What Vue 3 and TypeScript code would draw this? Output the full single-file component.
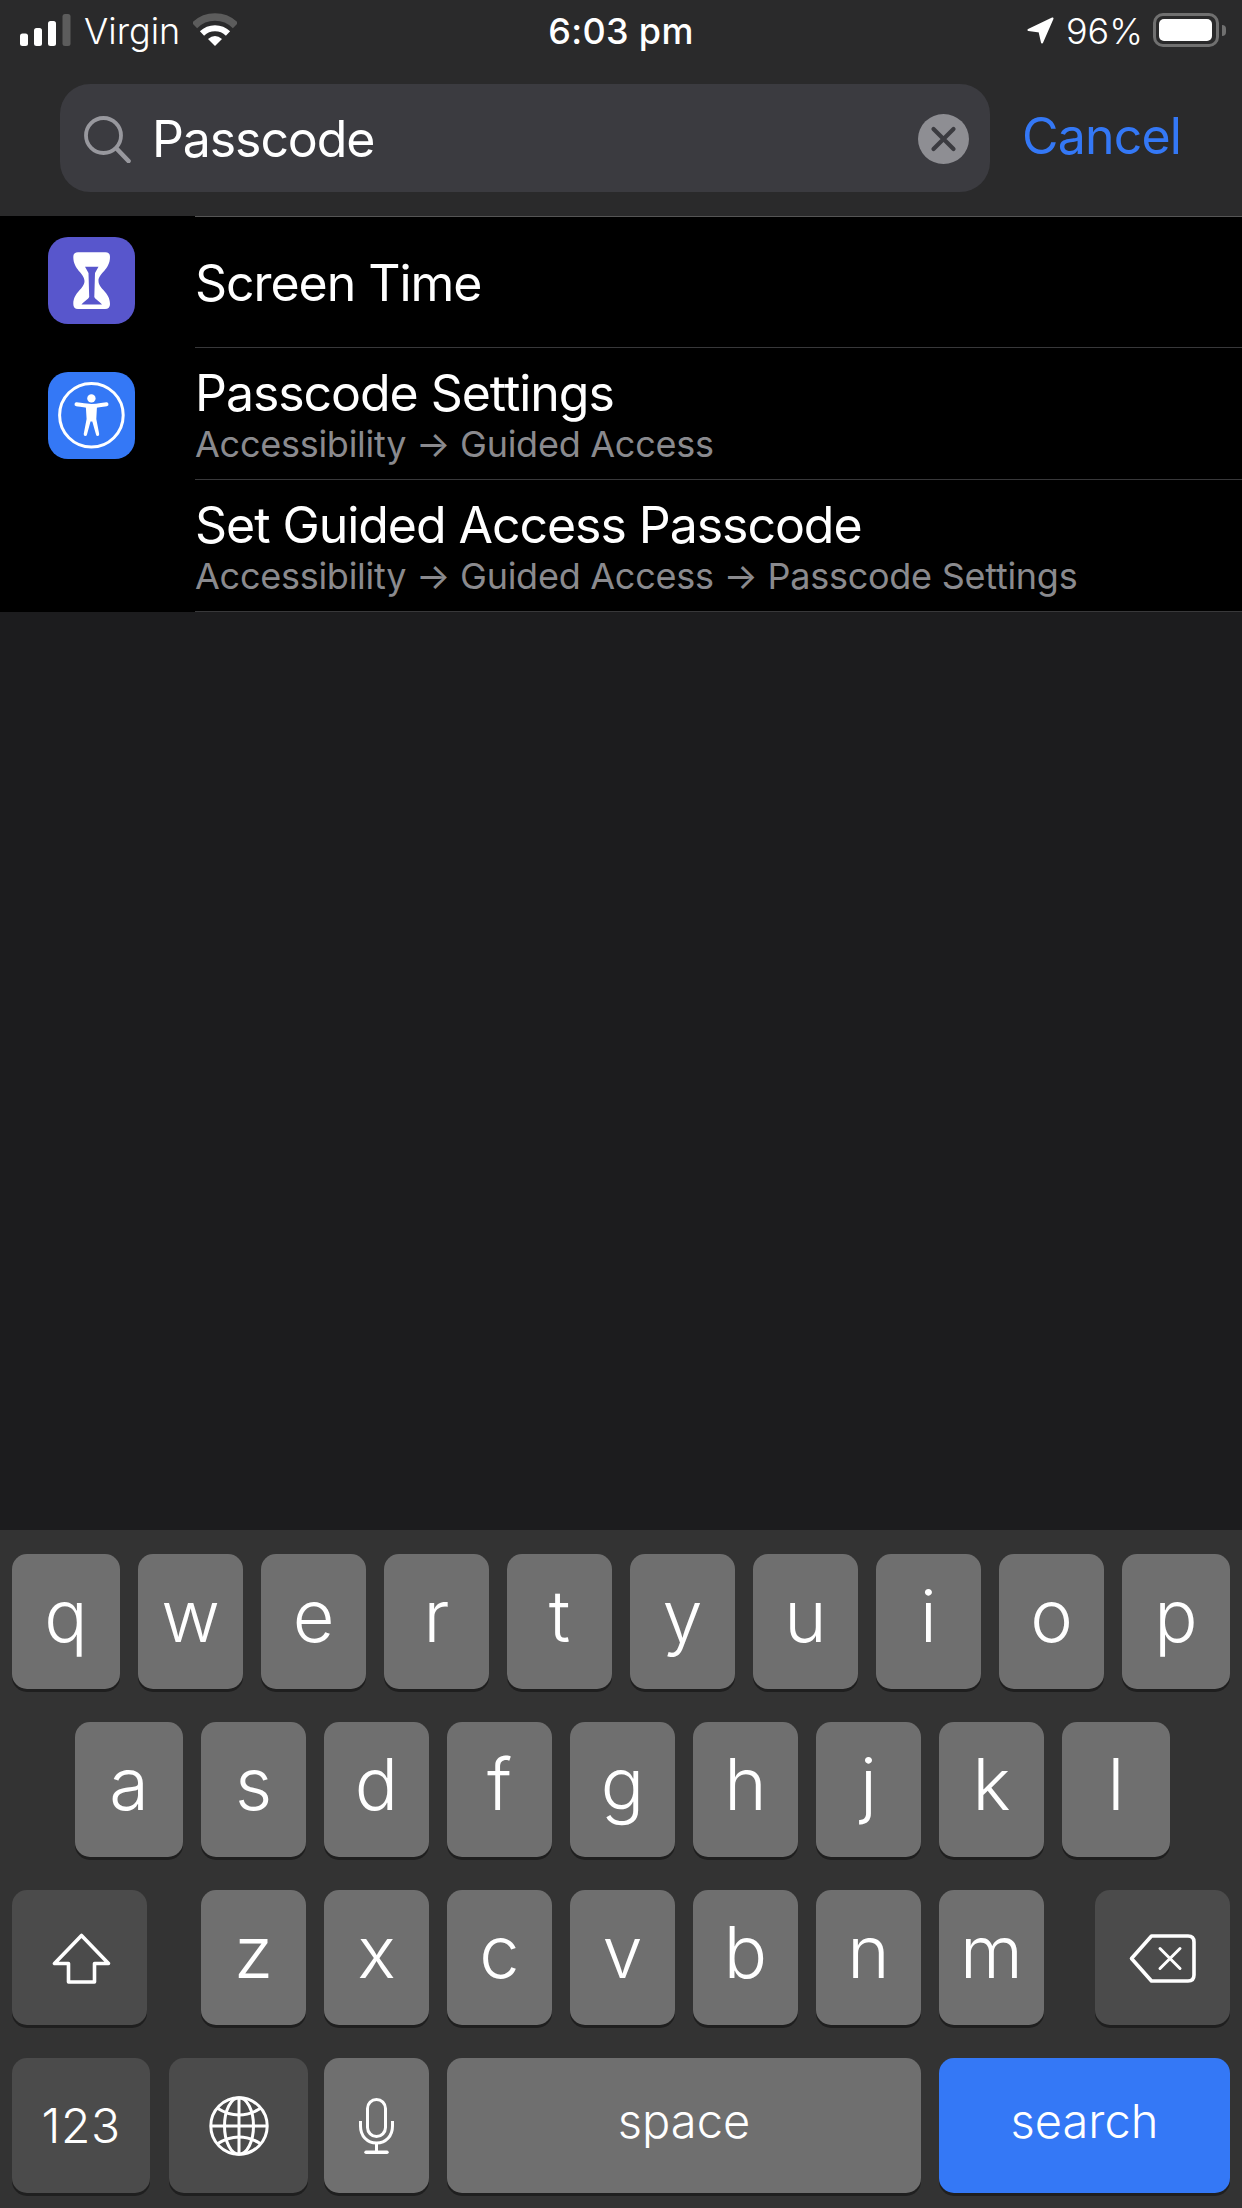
<script setup lang="ts">
interface KeyDef { label: string; wide?: boolean }
const toKeys = (letters: string, wideEnds: boolean): KeyDef[] =>
  letters.split('').map((label, i, all) => ({
    label,
    wide: wideEnds && (i === 0 || i === all.length - 1),
  }))
const row1 = toKeys('qwertyuiop', true)
const row2 = toKeys('asdfghjkl', true)
const row3 = toKeys('zxcvbnm', false)
</script>

<template>
  <div class="page">
    <header class="top">
      <div class="status">
        <div class="st-left">
          <svg class="signal" width="51" height="32" viewBox="0 0 51 32">
            <rect x="0" y="19.5" width="8" height="12.5" rx="2.5" fill="#fff" />
            <rect x="14" y="14" width="8" height="18" rx="2.5" fill="#fff" />
            <rect x="28" y="7" width="8" height="25" rx="2.5" fill="#fff" />
            <rect x="42.5" y="0" width="8" height="32" rx="2.5" fill="#5c5c5c" />
          </svg>
          <span class="carrier">Virgin</span>
          <svg class="wifi" width="44" height="33" viewBox="0 0 44 33" fill="none">
            <path d="M1.5 12.5 A29 29 0 0 1 42.5 12.5" stroke="#5c5c5c" stroke-width="7.5" />
            <path d="M9 20.5 A18.5 18.5 0 0 1 35 20.5" stroke="#fff" stroke-width="6" />
            <path d="M22 33 L15 26 Q22 20 29 26 Z" fill="#fff" />
          </svg>
        </div>
        <div class="time">6:03 pm</div>
        <div class="st-right">
          <svg class="loc" width="27" height="27" viewBox="0 0 27 27">
            <path d="M25.5 1.5 L1.5 13 L12.5 14.5 L15 25.5 Z" fill="#fff" stroke="#fff" stroke-width="2" stroke-linejoin="round" />
          </svg>
          <span class="pct">96%</span>
          <div class="battery">
            <div class="batt-fill"></div>
          </div>
          <div class="batt-nub"></div>
        </div>
      </div>
      <div class="search-row">
        <div class="field">
          <svg class="mag" width="47" height="47" viewBox="0 0 47 47" fill="none" stroke="#98989e" stroke-width="3.8" stroke-linecap="round">
            <circle cx="19.5" cy="19.5" r="17.5" />
            <path d="M32.5 32.5 L44.5 45" stroke-width="4.6" />
          </svg>
          <span class="query">Passcode</span>
          <svg class="clear" width="51" height="50" viewBox="0 0 51 50">
            <ellipse cx="25.5" cy="25" rx="25.5" ry="25" fill="#8e8e93" />
            <path d="M15.5 15 L35.5 35 M35.5 15 L15.5 35" stroke="#3b3b40" stroke-width="4.2" stroke-linecap="round" />
          </svg>
        </div>
        <span class="cancel">Cancel</span>
      </div>
    </header>

    <section class="results">
      <div class="group">
        <div class="icon-col">
          <svg class="app" width="87" height="87" viewBox="0 0 87 87">
            <rect width="87" height="87" rx="20" fill="#5856cc" />
            <path fill="#fff" fill-rule="evenodd" d="M30 15.3 H57.5 Q62 15.3 62 20 C62 33 50.5 36 50.5 44 C50.5 52 62 55 62 67 Q62 72 57 72 H30 Q25.3 72 25.3 67 C25.3 55 36.5 52 36.5 44 C36.5 36 25.3 33 25.3 20 Q25.3 15.3 30 15.3 Z M37 29.7 H50.5 L47 36 L46.3 60 C47 62 52 65 54 67.6 H33.5 C35.5 65 40.5 62 41.2 60 L40.5 36 Z" />
          </svg>
        </div>
        <div class="rows first">
          <div class="row single"><div class="title">Screen Time</div></div>
        </div>
      </div>
      <div class="group">
        <div class="icon-col second">
          <svg class="app" width="87" height="87" viewBox="0 0 87 87">
            <rect width="87" height="87" rx="20" fill="#3478f6" />
            <circle cx="43.4" cy="43.3" r="31.8" fill="none" stroke="#fff" stroke-width="3" />
            <circle cx="43.4" cy="26.4" r="4.2" fill="#fff" />
            <path d="M28.5 32.2 C35 33.2 38.5 34 43.4 34 C48.3 34 52 33.2 58.5 32.2" fill="none" stroke="#fff" stroke-width="4" stroke-linecap="round" />
            <path fill="#fff" d="M37.8 34 H49 L48.3 47 L51.2 62 Q51.4 64 49.6 64 Q48.3 64 48 62.5 L44.3 49.5 H42.5 L39 62.5 Q38.7 64 37.3 64 Q35.5 64 35.7 62 L38.6 47 Z" />
          </svg>
        </div>
        <div class="rows">
          <div class="row">
            <div class="title">Passcode Settings</div>
            <div class="sub">Accessibility → Guided Access</div>
          </div>
          <div class="row">
            <div class="title">Set Guided Access Passcode</div>
            <div class="sub">Accessibility → Guided Access → Passcode Settings</div>
          </div>
        </div>
      </div>
    </section>

    <div class="spacer"></div>

    <footer class="keyboard">
      <div class="kb-row">
        <div v-for="k in row1" :key="k.label" class="key letter" :class="{ wide: k.wide }">{{ k.label }}</div>
      </div>
      <div class="kb-row home">
        <div v-for="k in row2" :key="k.label" class="key letter" :class="{ wide: k.wide }">{{ k.label }}</div>
      </div>
      <div class="kb-row">
        <div class="key dark shift">
          <svg width="59" height="51" viewBox="0 0 59 51" fill="none" stroke="#fff" stroke-width="3.6" stroke-linejoin="round">
            <path d="M29.5 2.5 L2.5 30.5 H16.5 V49 H42.5 V30.5 H56.5 Z" />
          </svg>
        </div>
        <div v-for="k in row3" :key="k.label" class="key letter">{{ k.label }}</div>
        <div class="key dark del">
          <svg width="67" height="49" viewBox="0 0 67 49" fill="none" stroke="#fff" stroke-width="3.6" stroke-linejoin="round" stroke-linecap="round">
            <path d="M2.5 24.5 L22.5 2 H59 Q65 2 65 8 V41 Q65 47 59 47 H22.5 Z" />
            <path d="M31 14.5 L51 34.5 M51 14.5 L31 34.5" stroke-width="3" />
          </svg>
        </div>
      </div>
      <div class="kb-row">
        <div class="key dark num">123</div>
        <div class="key dark globe">
          <svg width="60" height="60" viewBox="0 0 60 60" fill="none" stroke="#fff" stroke-width="3">
            <circle cx="30" cy="30" r="28.2" />
            <ellipse cx="30" cy="30" rx="14.5" ry="28.2" />
            <path d="M30 2 V58 M2 30 H58" />
            <path d="M8 12 Q30 26 52 12 M8 48 Q30 34 52 48" />
          </svg>
        </div>
        <div class="key mic">
          <svg width="35" height="56" viewBox="0 0 35 56" fill="none" stroke="#fff" stroke-width="3">
            <rect x="8.5" y="1.5" width="18" height="37" rx="9" />
            <path d="M1.5 23 V28 C1.5 38 8 45 17.5 45 C27 45 33.5 38 33.5 28 V23" />
            <path d="M17.5 45 V53" />
            <path d="M7 54.3 H28" stroke-width="3.4" stroke-linecap="round" />
          </svg>
        </div>
        <div class="key space">space</div>
        <div class="key go">search</div>
      </div>
    </footer>
  </div>
</template>

<style scoped>
.page {
  width: 1242px;
  height: 2208px;
  display: flex;
  flex-direction: column;
  background: #1c1c1e;
  color: #fff;
  font-family: Inter, "Liberation Sans", sans-serif;
  overflow: hidden;
}
.top {
  height: 216px;
  background: #2a2a2b;
  flex: none;
}
.status {
  height: 60px;
  display: grid;
  grid-template-columns: 1fr auto 1fr;
  align-items: center;
  font-size: 36px;
}
.st-left {
  display: flex;
  align-items: center;
  padding-left: 20px;
}
.carrier {
  margin-left: 13px;
  margin-top: 2px;
  font-weight: 300;
}
.wifi {
  margin-left: 13px;
  margin-top: -1px;
}
.time {
  margin-top: 2px;
  font-weight: 500;
  font-size: 36px;
  letter-spacing: 0.3px;
  text-align: center;
}
.st-right {
  display: flex;
  align-items: center;
  justify-content: flex-end;
  padding-right: 16px;
}
.pct {
  margin-left: 12px;
  margin-top: 2px;
  font-weight: 300;
}
.battery {
  margin-left: 10px;
  width: 66px;
  height: 34px;
  box-sizing: border-box;
  border: 3px solid #707070;
  border-radius: 10px;
  padding: 3px;
}
.batt-fill {
  height: 100%;
  width: 53px;
  background: #fff;
  border-radius: 5px;
}
.batt-nub {
  margin-left: 3px;
  width: 4px;
  height: 11px;
  background: #707070;
  border-radius: 0 4px 4px 0;
}
.search-row {
  margin-top: 24px;
  padding-left: 60px;
  display: flex;
  align-items: center;
}
.field {
  width: 930px;
  height: 108px;
  background: #3b3b40;
  border-radius: 30px;
  display: flex;
  align-items: center;
  box-sizing: border-box;
  padding-left: 24px;
  padding-right: 21px;
}
.mag {
  flex: none;
  margin-top: 3px;
}
.query {
  margin-left: 21px;
  margin-top: 2px;
  font-size: 50px;
  letter-spacing: -1.1px;
  flex: 1;
}
.clear {
  flex: none;
  margin-top: 1px;
}
.cancel {
  margin-left: 32px;
  margin-top: -4px;
  font-size: 50px;
  font-weight: 400;
  letter-spacing: -0.8px;
  color: #3478f6;
}
.results {
  flex: none;
  height: 396px;
  background: #000;
}
.group {
  display: flex;
}
.icon-col {
  width: 195px;
  flex: none;
  box-sizing: border-box;
  padding-left: 48px;
  padding-top: 21px;
}
.icon-col.second {
  padding-top: 24px;
}
.app {
  display: block;
}
.rows {
  flex: 1;
  min-width: 0;
}
.rows.first {
  border-top: 1px solid #555;
}
.row {
  height: 132px;
  box-sizing: border-box;
  border-bottom: 1px solid #38383a;
  padding-top: 16px;
}
.row.single {
  height: 131px;
  padding-top: 2px;
  display: flex;
  align-items: center;
}
.title {
  font-size: 50px;
  line-height: 58px;
  letter-spacing: -1.05px;
}
.sub {
  margin-top: -1px;
  font-size: 36px;
  line-height: 46px;
  letter-spacing: -0.26px;
  color: #8a8a8e;
}
.spacer {
  flex: 1;
}
.keyboard {
  flex: none;
  height: 678px;
  box-sizing: border-box;
  padding: 24px 12px 15px;
  background: #333;
  display: flex;
  flex-direction: column;
  gap: 33px;
}
.kb-row {
  display: flex;
  gap: 18px;
  height: 135px;
}
.kb-row.home {
  padding-left: 63px;
}
.key {
  width: 105px;
  height: 135px;
  flex: none;
  box-sizing: border-box;
  border-radius: 15px;
  background: #6f6f6f;
  box-shadow: 0 3px 0 #1f1f1f;
  display: flex;
  align-items: center;
  justify-content: center;
}
.key.wide {
  width: 108px;
}
.letter {
  font-size: 72px;
  font-weight: 300;
  padding-bottom: 13px;
}
.dark {
  background: #4b4b4b;
}
.shift,
.del {
  width: 135px;
  padding-top: 2px;
}
.shift {
  margin-right: 36px;
  padding-left: 4px;
}
.del {
  margin-left: 33px;
}
.num {
  width: 138px;
  font-size: 48px;
  font-weight: 300;
  letter-spacing: 0.5px;
}
.globe {
  width: 139px;
  margin-left: 1px;
}
.mic {
  margin-left: -2px;
}
.space {
  width: 474px;
  font-size: 47px;
  font-weight: 300;
  padding-bottom: 11px;
}
.go {
  width: 291px;
  font-size: 47px;
  font-weight: 300;
  padding-bottom: 11px;
  background: #3478f6;
}
</style>
